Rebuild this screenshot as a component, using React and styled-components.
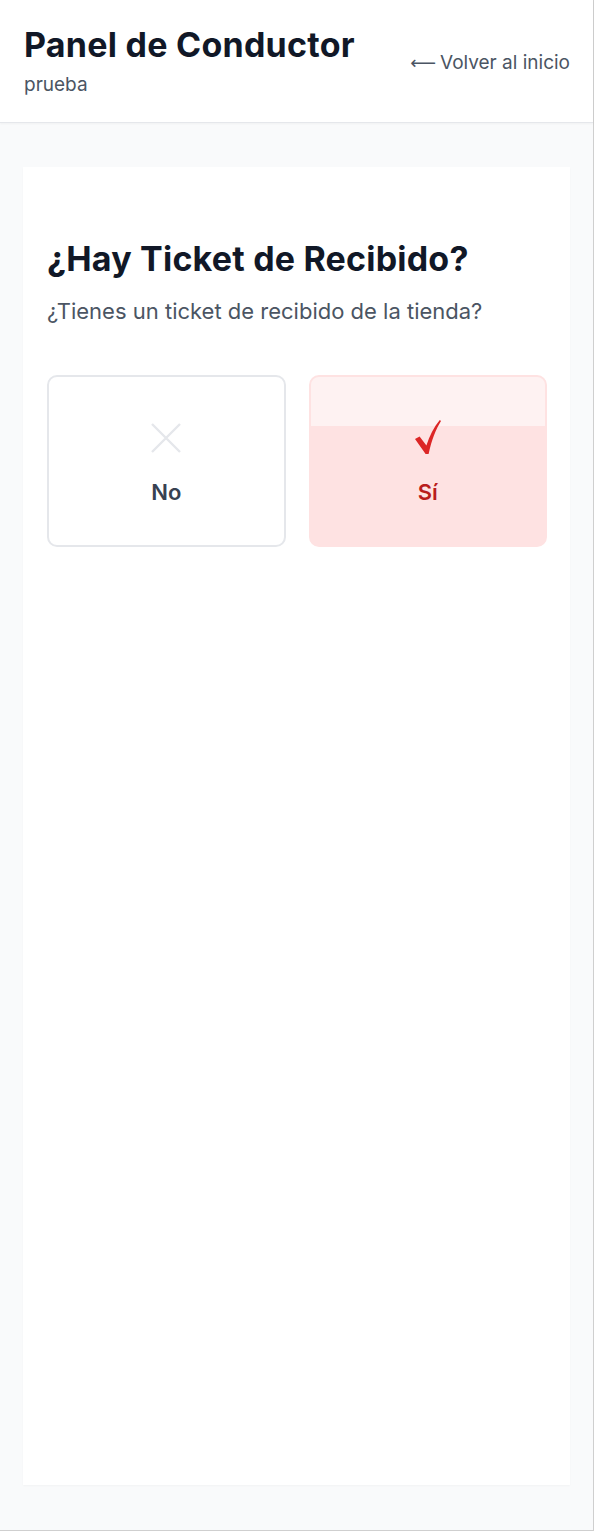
import React, { useState } from "react";
import styled, { createGlobalStyle } from "styled-components";

const GlobalStyle = createGlobalStyle`
	* {
		box-sizing: border-box;
	}

	body {
		margin: 0;
		font-family: Inter, "Noto Sans", "Liberation Sans", sans-serif;
		background: #ffffff;
	}
`;

const Frame = styled.div`
	width: 594px;
	min-height: 1531px;
	display: flex;
	flex-direction: column;
	background: #f9fafb;
	border-right: 1px solid #cfcfcf;
	border-bottom: 1px solid #cfcfcf;
`;

const Header = styled.header`
	height: 123px;
	display: flex;
	align-items: center;
	justify-content: space-between;
	padding: 0 23px 0 24px;
	background: #ffffff;
	border-bottom: 1px solid #e5e7eb;
	box-shadow: 0 1px 2px rgba(0, 0, 0, 0.04);
`;

const TitleBlock = styled.div`
	display: flex;
	flex-direction: column;
	gap: 8px;
	padding-top: 2px;
`;

const Title = styled.h1`
	margin: 0;
	font-size: 34px;
	line-height: 38px;
	font-weight: 700;
	color: #111827;
	letter-spacing: 0.25px;
`;

const Subtitle = styled.span`
	font-size: 19px;
	line-height: 26px;
	color: #4b5563;
`;

const BackLink = styled.a`
	font-size: 19px;
	color: #4b5563;
	text-decoration: none;
	margin-top: 2px;
	cursor: pointer;
`;

const Arrow = styled.span`
	font-family: "DejaVu Sans", sans-serif;
	font-size: 18px;
	margin-right: 4px;
`;

const Main = styled.main`
	flex: 1;
	display: flex;
	padding: 44px 23px 45px 23px;
`;

const Card = styled.section`
	flex: 1;
	background: #ffffff;
	padding: 72px 23px 24px 24px;
	box-shadow: 0 1px 2px rgba(0, 0, 0, 0.03);
`;

const Question = styled.h2`
	margin: 0;
	font-size: 34px;
	line-height: 40px;
	font-weight: 700;
	color: #111827;
	letter-spacing: 0.2px;
`;

const Hint = styled.p`
	margin: 17px 0 0;
	font-size: 22px;
	line-height: 30px;
	color: #4b5563;
`;

const Options = styled.div`
	display: grid;
	grid-template-columns: 1fr 1fr;
	gap: 23px;
	margin-top: 49px;
`;

const Option = styled.button`
	height: 172px;
	display: flex;
	flex-direction: column;
	align-items: center;
	justify-content: flex-start;
	gap: 24px;
	padding: 45px 0 0;
	border-radius: 10px;
	border: 2px solid ${props => (props.$active ? "#fee2e2" : "#e5e7eb")};
	background: ${props =>
		props.$active
			? "linear-gradient(#fef2f2 0, #fef2f2 49px, #fee2e2 49px)"
			: "#ffffff"};
	font-family: inherit;
	cursor: pointer;
`;

const OptionIcon = styled.span`
	height: 32px;
	display: flex;
	align-items: ${props => (props.$active ? "flex-start" : "center")};
	justify-content: center;
	color: ${props => (props.$active ? "#dc2626" : "#e5e7eb")};

	svg {
		margin-top: ${props => (props.$active ? "-2px" : "0")};
	}
`;

const OptionLabel = styled.span`
	font-size: 22px;
	line-height: 28px;
	font-weight: 600;
	color: ${props => (props.$active ? "#b91c1c" : "#374151")};
`;

const CrossIcon = () => (
	<svg width="30" height="30" viewBox="0 0 30 30" fill="none">
		<path d="M1 1 L29 29 M29 1 L1 29" stroke="currentColor" strokeWidth="2.4" />
	</svg>
);

const CheckIcon = () => (
	<svg width="26" height="34" viewBox="0 0 26 34">
		<path
			d="M0 19 L4.6 16.4 L11.4 25.6 C14.4 16 19 7 24.8 0 L26 1 C21 9 16.6 20 13.6 34 L10.6 34 Z"
			fill="currentColor"
		/>
	</svg>
);

const App = () => {
	const [answer, setAnswer] = useState("yes");

	return (
		<>
			<GlobalStyle />
			<Frame>
				<Header>
					<TitleBlock>
						<Title>Panel de Conductor</Title>
						<Subtitle>prueba</Subtitle>
					</TitleBlock>
					<BackLink>
						<Arrow>⟵</Arrow>Volver al inicio
					</BackLink>
				</Header>
				<Main>
					<Card>
						<Question>¿Hay Ticket de Recibido?</Question>
						<Hint>¿Tienes un ticket de recibido de la tienda?</Hint>
						<Options>
							<Option $active={answer === "no"} onClick={() => setAnswer("no")}>
								<OptionIcon $active={answer === "no"}>
									{answer === "no" ? <CheckIcon /> : <CrossIcon />}
								</OptionIcon>
								<OptionLabel $active={answer === "no"}>No</OptionLabel>
							</Option>
							<Option $active={answer === "yes"} onClick={() => setAnswer("yes")}>
								<OptionIcon $active={answer === "yes"}>
									{answer === "yes" ? <CheckIcon /> : <CrossIcon />}
								</OptionIcon>
								<OptionLabel $active={answer === "yes"}>Sí</OptionLabel>
							</Option>
						</Options>
					</Card>
				</Main>
			</Frame>
		</>
	);
};

export default App;
